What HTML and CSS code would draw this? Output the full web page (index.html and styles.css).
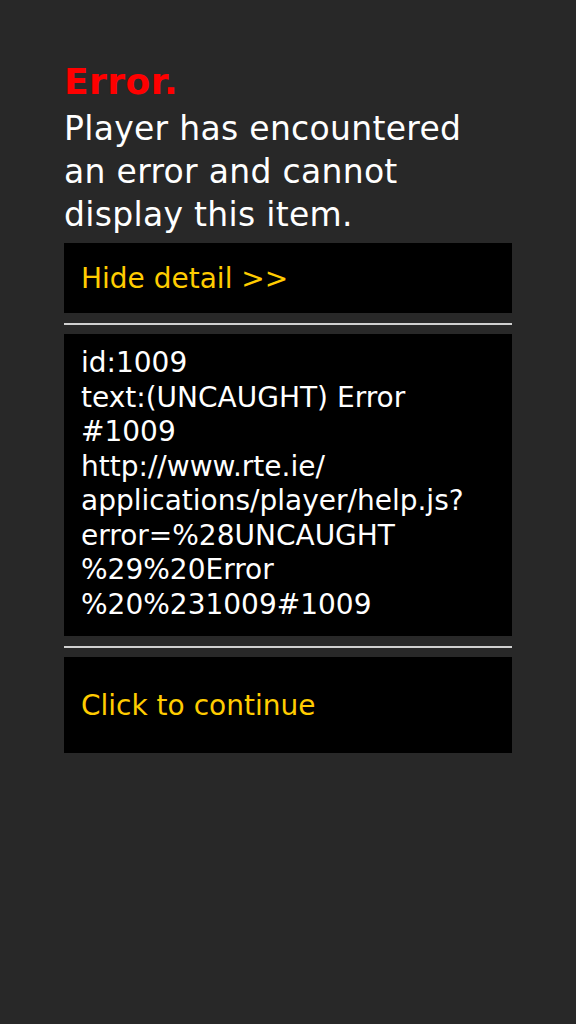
FILE: index.html
```html
<!doctype html>
<html lang="en">
  <head>
    <meta charset="UTF-8" />
    <meta name="viewport" content="width=device-width, initial-scale=1.0" />
    <title>Player Error</title>
    <link rel="stylesheet" href="styles.css">
  </head>
  <body>
    <div class="error-panel">
      <h1 class="title">Error.</h1>
      <p class="message">Player has encountered an error and cannot display this item.</p>
      <div class="action">Hide detail &gt;&gt;</div>
      <div class="divider"></div>
      <div class="detail">
        <div>id:1009</div>
        <div>text:(UNCAUGHT) Error #1009</div>
        <div>http://www.rte.ie/ applications/player/help.js? error=%28UNCAUGHT %29%20Error %20%231009#1009</div>
      </div>
      <div class="divider"></div>
      <div class="action continue">Click to continue</div>
    </div>
  </body>
</html>
```

FILE: styles.css
```css
body {
  margin: 0;
  background: #282828;
  font-family: "DejaVu Sans", Verdana, sans-serif;
  color: white;
}
.error-panel {
  width: 448px;
  padding: 60px 64px;
}
.title {
  margin: 0;
  font-size: 36px;
  line-height: 44px;
  letter-spacing: 0.5px;
  color: #ff0000;
}
.message {
  margin: 3px 0 0;
  font-size: 33px;
  line-height: 43px;
  letter-spacing: 0.3px;
}
.action {
  display: flex;
  align-items: center;
  height: 70px;
  margin-top: 7px;
  padding: 0 17px;
  background: black;
  color: #ffcc00;
  font-size: 28px;
}
.continue {
  height: 96px;
  margin-top: 0;
}
.divider {
  height: 2px;
  margin: 10px 0 9px;
  background: #d0d0d0;
}
.detail {
  padding: 12px 17px 14px;
  background: black;
  font-size: 28px;
  line-height: 34.5px;
}
```
